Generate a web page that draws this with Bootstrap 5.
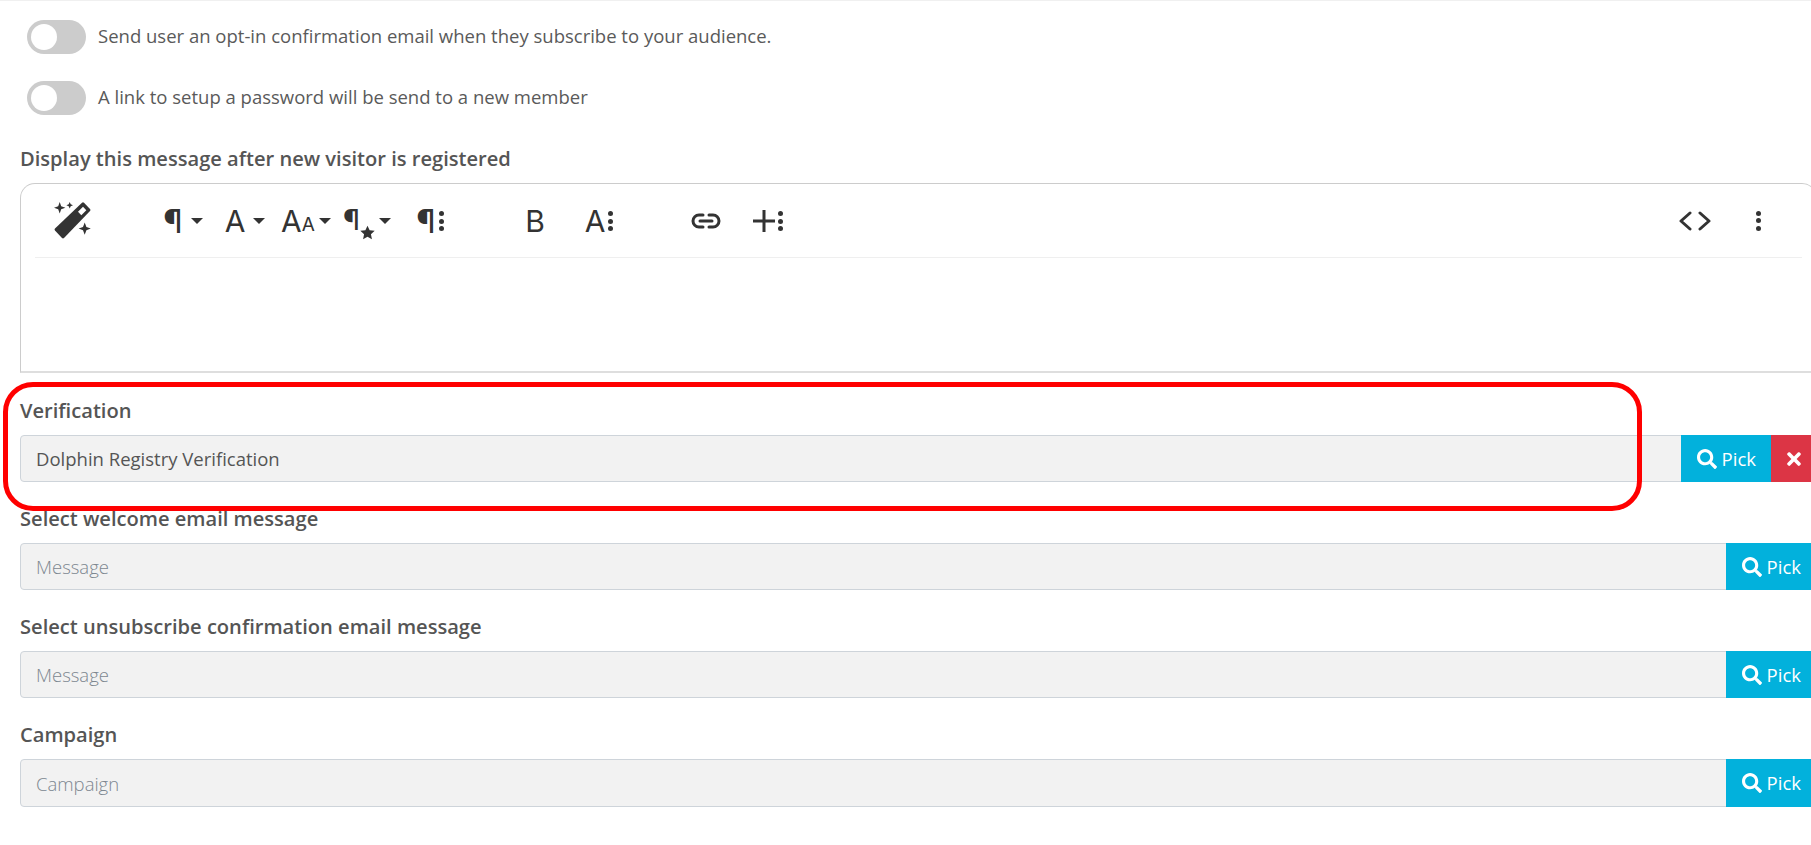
<!DOCTYPE html>
<html lang="en">
<head>
<meta charset="utf-8">
<title>Audience settings</title>
<link href="https://cdn.jsdelivr.net/npm/bootstrap@5.3.0/dist/css/bootstrap.min.css" rel="stylesheet">
<style>
html,body{overflow:hidden;height:845px;background:#fff}
body{font-family:"Open Sans","Noto Sans",sans-serif;font-size:18.5px;color:#5a5a5a}
.page-wrap{position:relative;width:1817px;height:845px;padding:19px 0 0 20px;border-top:1px solid #f0f0f0}
.opt-row{height:34px;margin-bottom:27px;padding-left:7px}
.opt-row:nth-child(2){margin-bottom:30px}
.opt-text{padding-bottom:3px}
.slider-track{position:relative;display:block;flex:none;width:59px;height:34px;border-radius:17px;background:#ccc;margin-right:12px}
.slider-track::after{content:"";position:absolute;left:4px;top:4px;width:26px;height:26px;border-radius:50%;background:#fff}
.field-label{display:block;height:27px;line-height:27px;margin:0 0 11px;font-size:20.1px;font-weight:600;color:#555}
.editor-box{height:190px;margin-bottom:24px;border:1px solid #ccc;border-bottom:2px solid #dedede;border-radius:15px 15px 0 0;padding:0 14px 0 14px}
.tool-strip{height:74px;border-bottom:1px solid #efefef;color:#333}
.tool-btn{position:relative;display:flex;flex:none;align-items:center;justify-content:center;height:46px;font-family:Inter,"Liberation Sans",sans-serif;font-size:30px;line-height:1;color:#333}
.tool-btn svg{display:block}
.para-glyph{font-size:33px;padding-top:2px}
.para-small{font-size:29px;padding-bottom:2px}
.caret-mark{display:block;flex:none;width:0;height:0;border-left:6px solid transparent;border-right:6px solid transparent;border-top:6px solid #333;margin-left:8px}
.dot-col{display:flex;flex-direction:column;gap:2.500px;margin-left:3px;margin-top:1px}
.dot-col i{display:block;width:5px;height:5px;border-radius:50%;background:#333}
.small-a{font-size:19px;align-self:center;margin-top:7px}
.w-wand{width:46px;margin-left:14px}
.w-para{width:46px;margin-left:65px}
.w-font{width:46px;margin-left:16px}
.w-size{width:52px;margin-left:12px}
.w-style{width:52px;margin-left:9px}
.w-more{width:36px;margin-left:19px}
.w-bold{width:36px;margin-left:69px}
.w-color{width:36px;margin-left:28px}
.w-link{width:46px;margin-left:66px}
.w-plus{width:46px;margin-left:16px}
.w-code{width:46px}
.w-dots{width:46px;margin-left:17px;margin-right:21px}
.field-block{margin-bottom:23px}
.field-block .form-control{height:47px;padding:0 15px;background:#f2f2f2;border:1px solid #ced4da;border-radius:4px 0 0 4px;font-size:18.5px;color:#555}
.field-block:nth-last-child(2) .form-control{height:48px}
.field-block .form-control::placeholder{color:#7d8790;font-weight:300}
.pick-btn{display:flex;align-items:center;gap:5px;padding:0 16px;border:0;border-radius:0;background:#02b1dc;color:#fff;font-size:18.5px}
.pick-btn:hover{background:#02b1dc;color:#fff}
.clear-btn{display:flex;align-items:center;width:46px;padding:0 16px;border:0;border-radius:0;background:#dc3545;color:#fff}
.clear-btn:hover{background:#dc3545;color:#fff}
.red-callout{position:absolute;left:3px;top:381px;width:1639px;height:129px;border:5px solid #f00;border-radius:30px;pointer-events:none}
</style>
</head>
<body>
<div class="page-wrap">
  <div class="opt-row d-flex align-items-center"><span class="slider-track"></span><span class="opt-text">Send user an opt-in confirmation email when they subscribe to your audience.</span></div>
  <div class="opt-row d-flex align-items-center"><span class="slider-track"></span><span class="opt-text">A link to setup a password will be send to a new member</span></div>

  <label class="field-label">Display this message after new visitor is registered</label>
  <div class="editor-box">
    <div class="tool-strip d-flex align-items-center">
      <span class="tool-btn w-wand"><svg width="37" height="37" viewBox="0 0 37 37"><path fill="#333" d="M28 .8a1.500 1.500 0 0 1 2 0l6 6.200a1.500 1.500 0 0 1 0 2L10 36a1.500 1.500 0 0 1-2 0l-7-7.500a1.500 1.500 0 0 1 0-2z"/><path fill="#fff" d="M29 4.800l3.300 3.500-5 5-3.300-3.500z"/><path fill="#333" d="M5.700 0l1.500 4.200 4.200 1.500-4.200 1.500-1.500 4.200-1.500-4.200L0 5.700l4.200-1.500zM15.700 0l1 2.300 2.300 1-2.300 1-1 2.300-1-2.300-2.300-1 2.300-1zM30.700 20.500l1.700 4.400 4.400 1.700-4.400 1.700-1.700 4.400-1.700-4.400-4.400-1.700 4.400-1.700z"/></svg></span>
      <span class="tool-btn w-para"><span class="para-glyph">¶</span><span class="caret-mark"></span></span>
      <span class="tool-btn w-font">A<span class="caret-mark"></span></span>
      <span class="tool-btn w-size">A<span class="small-a">A</span><span class="caret-mark ms-1"></span></span>
      <span class="tool-btn w-style"><span class="para-small">¶</span><svg width="15" height="15" viewBox="0 0 24 24" class="align-self-end mb-1"><path fill="#333" d="M12 1l3.400 7.400 8.100.900-6 5.500 1.600 8L12 18.800 4.900 22.800l1.600-8-6-5.500 8.100-.900z"/></svg><span class="caret-mark ms-1"></span></span>
      <span class="tool-btn w-more"><span class="para-glyph">¶</span><span class="dot-col"><i></i><i></i><i></i></span></span>
      <span class="tool-btn w-bold">B</span>
      <span class="tool-btn w-color">A<span class="dot-col"><i></i><i></i><i></i></span></span>
      <span class="tool-btn w-link"><svg width="30" height="16" viewBox="0 0 30 16" fill="none" stroke="#333" stroke-width="3" stroke-linecap="round"><path d="M12 2H8a6 6 0 0 0 0 12h4M18 2h4a6 6 0 0 1 0 12h-4M9 8h12"/></svg></span>
      <span class="tool-btn w-plus"><svg width="22" height="22" viewBox="0 0 22 22" stroke="#333" stroke-width="3"><path d="M11 0v22M0 11h22"/></svg><span class="dot-col"><i></i><i></i><i></i></span></span>
      <span class="flex-grow-1"></span>
      <span class="tool-btn w-code"><svg width="32" height="20" viewBox="0 0 32 20" fill="none" stroke="#333" stroke-width="3" stroke-linecap="round" stroke-linejoin="round"><path d="M11 2l-9 8 9 8M21 2l9 8-9 8"/></svg></span>
      <span class="tool-btn w-dots"><span class="dot-col m-0"><i></i><i></i><i></i></span></span>
    </div>
  </div>

  <div class="field-block">
    <label class="field-label">Verification</label>
    <div class="input-group flex-nowrap">
      <input class="form-control" type="text" value="Dolphin Registry Verification" readonly>
      <button class="btn pick-btn" type="button"><svg width="20" height="20" viewBox="0 0 512 512"><path fill="#fff" d="M505 442.700L405.300 343c-4.500-4.500-10.600-7-17-7H372c27.600-35.300 44-79.700 44-128C416 93.100 322.900 0 208 0S0 93.100 0 208s93.100 208 208 208c48.300 0 92.700-16.400 128-44v16.300c0 6.400 2.500 12.500 7 17l99.700 99.700c9.400 9.400 24.600 9.400 33.900 0l28.300-28.300c9.400-9.400 9.400-24.600.1-34zM208 336c-70.700 0-128-57.200-128-128 0-70.700 57.200-128 128-128 70.700 0 128 57.200 128 128 0 70.700-57.200 128-128 128z"/></svg>Pick</button>
      <button class="btn clear-btn" type="button" aria-label="Clear"><svg width="14" height="20" viewBox="0 0 352 512"><path fill="#fff" d="M242.720 256l100.070-100.070c12.280-12.280 12.280-32.190 0-44.480l-22.240-22.240c-12.280-12.280-32.190-12.280-44.480 0L176 189.280 75.930 89.210c-12.280-12.280-32.190-12.280-44.480 0L9.210 111.450c-12.280 12.280-12.280 32.190 0 44.480L109.280 256 9.210 356.070c-12.280 12.280-12.280 32.190 0 44.480l22.240 22.240c12.280 12.280 32.200 12.280 44.480 0L176 322.720l100.070 100.070c12.280 12.280 32.200 12.280 44.480 0l22.240-22.240c12.280-12.280 12.280-32.190 0-44.480L242.720 256z"/></svg></button>
    </div>
  </div>

  <div class="field-block">
    <label class="field-label">Select welcome email message</label>
    <div class="input-group flex-nowrap">
      <input class="form-control" type="text" placeholder="Message" readonly>
      <button class="btn pick-btn" type="button"><svg width="20" height="20" viewBox="0 0 512 512"><path fill="#fff" d="M505 442.700L405.300 343c-4.500-4.500-10.600-7-17-7H372c27.600-35.300 44-79.700 44-128C416 93.100 322.900 0 208 0S0 93.100 0 208s93.100 208 208 208c48.300 0 92.700-16.400 128-44v16.300c0 6.400 2.500 12.500 7 17l99.700 99.700c9.400 9.400 24.600 9.400 33.900 0l28.300-28.300c9.400-9.400 9.400-24.600.1-34zM208 336c-70.700 0-128-57.200-128-128 0-70.700 57.200-128 128-128 70.700 0 128 57.200 128 128 0 70.700-57.200 128-128 128z"/></svg>Pick</button>
    </div>
  </div>

  <div class="field-block">
    <label class="field-label">Select unsubscribe confirmation email message</label>
    <div class="input-group flex-nowrap">
      <input class="form-control" type="text" placeholder="Message" readonly>
      <button class="btn pick-btn" type="button"><svg width="20" height="20" viewBox="0 0 512 512"><path fill="#fff" d="M505 442.700L405.300 343c-4.500-4.500-10.600-7-17-7H372c27.600-35.300 44-79.700 44-128C416 93.100 322.900 0 208 0S0 93.100 0 208s93.100 208 208 208c48.300 0 92.700-16.400 128-44v16.300c0 6.400 2.500 12.500 7 17l99.700 99.700c9.400 9.400 24.600 9.400 33.900 0l28.300-28.300c9.400-9.400 9.400-24.600.1-34zM208 336c-70.700 0-128-57.200-128-128 0-70.700 57.200-128 128-128 70.700 0 128 57.200 128 128 0 70.700-57.200 128-128 128z"/></svg>Pick</button>
    </div>
  </div>

  <div class="field-block">
    <label class="field-label">Campaign</label>
    <div class="input-group flex-nowrap">
      <input class="form-control" type="text" placeholder="Campaign" readonly>
      <button class="btn pick-btn" type="button"><svg width="20" height="20" viewBox="0 0 512 512"><path fill="#fff" d="M505 442.700L405.300 343c-4.500-4.500-10.600-7-17-7H372c27.600-35.300 44-79.700 44-128C416 93.100 322.900 0 208 0S0 93.100 0 208s93.100 208 208 208c48.300 0 92.700-16.400 128-44v16.300c0 6.400 2.500 12.500 7 17l99.700 99.700c9.400 9.400 24.600 9.400 33.900 0l28.300-28.300c9.400-9.400 9.400-24.600.1-34zM208 336c-70.700 0-128-57.200-128-128 0-70.700 57.200-128 128-128 70.700 0 128 57.200 128 128 0 70.700-57.200 128-128 128z"/></svg>Pick</button>
    </div>
  </div>

  <div class="red-callout"></div>
</div>
<script src="https://cdn.jsdelivr.net/npm/bootstrap@5.3.0/dist/js/bootstrap.bundle.min.js"></script>
</body>
</html>
